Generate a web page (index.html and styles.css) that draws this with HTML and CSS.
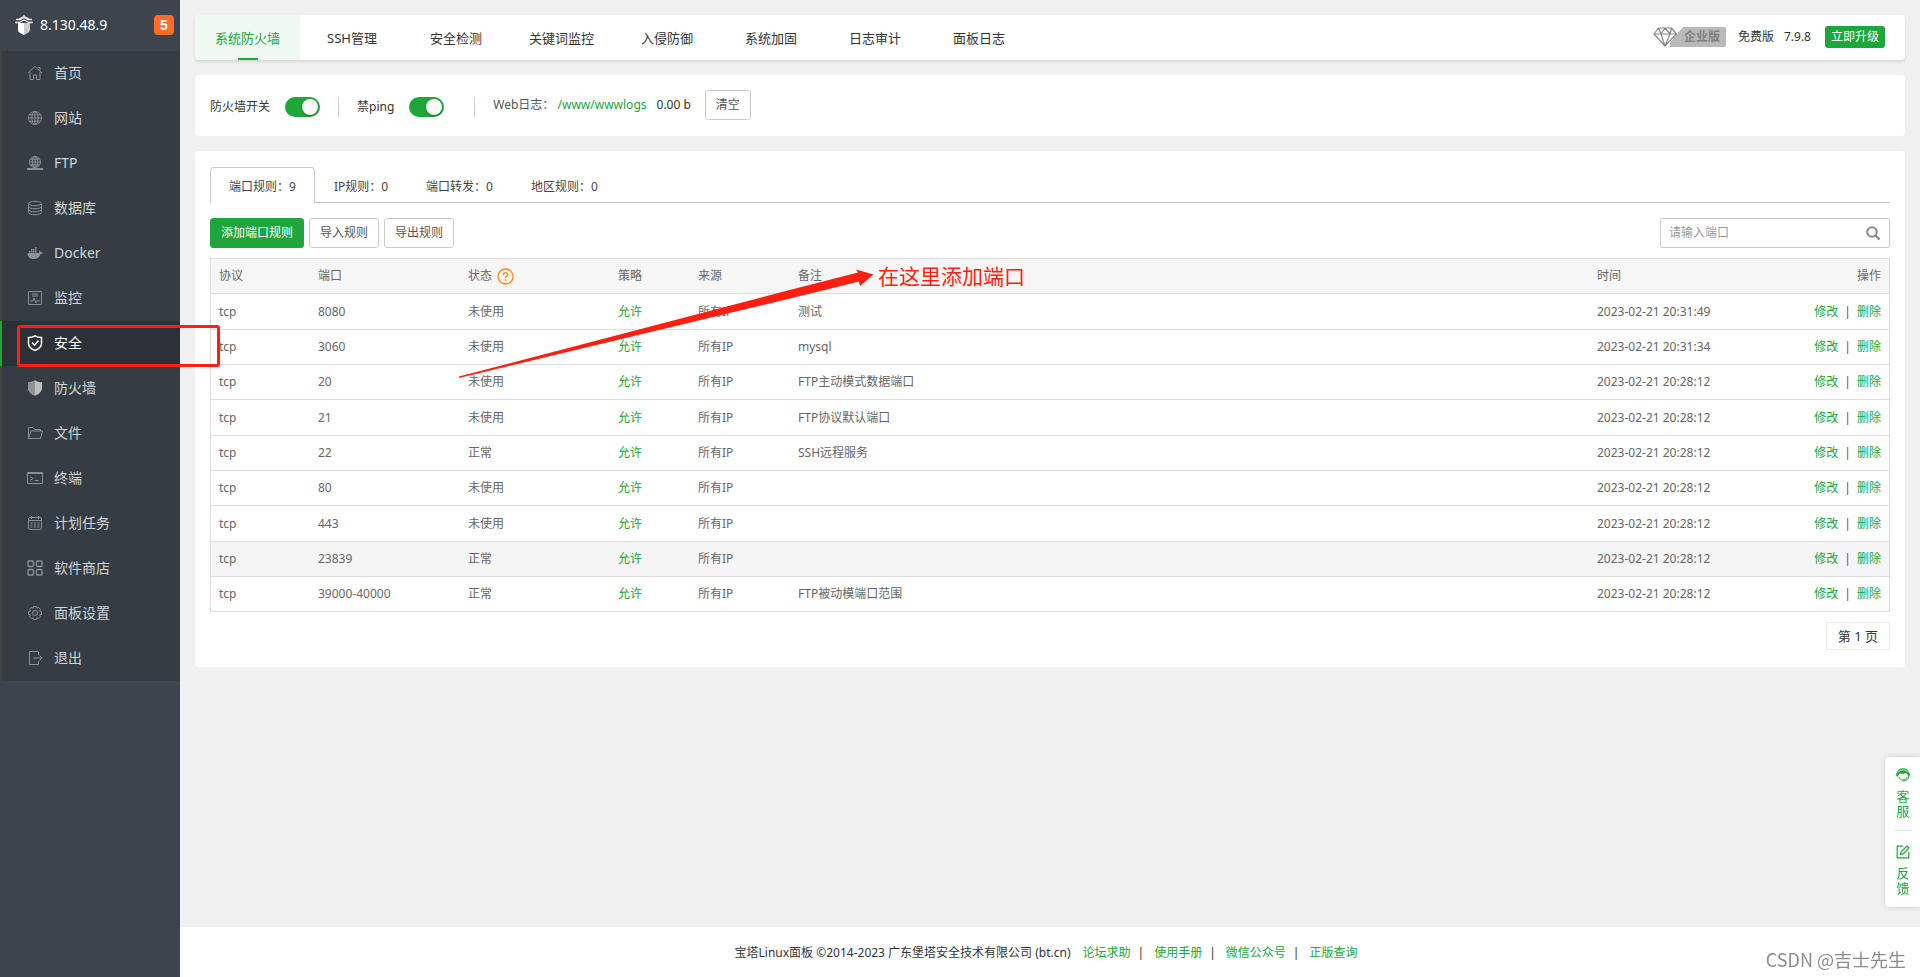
FILE: index.html
```html
<!DOCTYPE html>
<html lang="zh-CN">
<head>
<meta charset="utf-8">
<title>宝塔Linux面板</title>
<link rel="stylesheet" href="styles.css">
</head>
<body>
<div class="layout">
  <aside class="sidebar">
    <div class="brand">
      <svg class="brand-logo" viewBox="0 0 18 20" width="18" height="20"><path fill="#c9cbcd" d="M3 8h12v7c0 2-3 3.500-6 5-3-1.500-6-3-6-5z"/><path fill="#fff" d="M3 8h6v12c-3-1.500-6-3-6-5z"/><path fill="none" stroke="#e8e9ea" stroke-width="1.300" d="M9 0v3M4 4l5-2.500L14 4M1 4.500h4l4-2 4 2h4M0 7.500h4l5-2.500 5 2.500h4"/></svg>
      <span class="brand-ip">8.130.48.9</span>
      <span class="brand-badge">5</span>
    </div>
    <nav class="menu">
      <a class="menu-item" href="#"><svg class="menu-icon" viewBox="0 0 16 16"><path d="M1 8l7-6.500L15 8M3 7v7.500h3.500V10h3v4.500H13V7M11 2.500h2v3"/></svg>首页</a>
      <a class="menu-item" href="#"><svg class="menu-icon" viewBox="0 0 16 16"><circle cx="8" cy="8" r="6.500"/><ellipse cx="8" cy="8" rx="3.200" ry="6.500"/><path d="M8 1.500v13M1.500 8h13M2.500 4.800h11M2.500 11.200h11"/></svg>网站</a>
      <a class="menu-item" href="#"><svg class="menu-icon" viewBox="0 0 16 16"><circle cx="8" cy="7" r="5.500"/><ellipse cx="8" cy="7" rx="2.700" ry="5.500"/><path d="M8 1.500v11M2.500 7h11M3.500 4.200h9M3.500 9.800h9"/><path stroke-width="2" d="M0 14h16"/></svg>FTP</a>
      <a class="menu-item" href="#"><svg class="menu-icon" viewBox="0 0 16 16"><ellipse cx="8" cy="3.500" rx="6.500" ry="2.200"/><path d="M1.500 3.500v9c0 3 13 3 13 0v-9M1.500 6.500c0 3 13 3 13 0M1.500 9.500c0 3 13 3 13 0"/></svg>数据库</a>
      <a class="menu-item" href="#"><svg class="menu-icon menu-icon-fill" viewBox="0 0 16 16"><path d="M1 8h10.500c.8-.3 1-1.500.6-2.500 1 .3 1.500 1 1.600 1.700.8-.1 1.700 0 2.300.5-.5 1-1.500 1.300-2.500 1.300C12.500 12.500 10 14 6.500 14 3 14 .6 12 .6 8.500zM2 6h1.500v1.500H2zM4 6h1.500v1.500H4zM6 6h1.500v1.500H6zM8 6h1.500v1.500H8zM4 4h1.500v1.500H4zM6 4h1.500v1.500H6zM8 4h1.500v1.500H8zM8 2h1.500v1.500H8z"/></svg>Docker</a>
      <a class="menu-item" href="#"><svg class="menu-icon" viewBox="0 0 16 16"><path d="M1.500 1.500h13v13h-13zM5 4h6M5 6h6M3 11h3l1-3 2 5 1.500-3 1 1H13"/></svg>监控</a>
      <a class="menu-item menu-item-active" href="#"><svg class="menu-icon" viewBox="0 0 16 16"><path stroke-width="1.500" d="M8 .8c2 1.300 4 1.700 6.500 1.700v6c0 3.500-3 5.500-6.500 7-3.500-1.500-6.500-3.500-6.500-7v-6C4 2.500 6 2.100 8 .8zM5 7.500l2.500 2.700L11.500 5.500"/></svg>安全</a>
      <a class="menu-item" href="#"><svg class="menu-icon menu-icon-fill" viewBox="0 0 16 16"><path fill="#bdbfc1" d="M8 .3c2 1.500 4 2 7 2v6c0 3.700-3.500 5.900-7 7.500-3.500-1.600-7-3.800-7-7.500v-6c3 0 5-.5 7-2z"/><path fill="#8f9396" d="M8 .3v15.500c-3.500-1.600-7-3.800-7-7.500v-6c3 0 5-.5 7-2z"/></svg>防火墙</a>
      <a class="menu-item" href="#"><svg class="menu-icon" viewBox="0 0 16 16"><path d="M1.500 13.500v-11h4.500l1.500 2h6V6M1.500 13.500L4 6h11.500l-2 7.500z"/></svg>文件</a>
      <a class="menu-item" href="#"><svg class="menu-icon" viewBox="0 0 16 16"><path d="M.5 2.500h15v11H.5zM3 6.500l3 2-3 2M7.500 10.500h4"/><path stroke-width="2" d="M.5 3h15"/></svg>终端</a>
      <a class="menu-item" href="#"><svg class="menu-icon" viewBox="0 0 16 16"><path d="M3 2.500h10a1.500 1.500 0 0 1 1.500 1.500v9a1.500 1.500 0 0 1-1.500 1.500H3A1.500 1.500 0 0 1 1.500 13V4A1.500 1.500 0 0 1 3 2.500zM1.500 5.500h13M4.500 1v3M11.500 1v3"/><path stroke-dasharray="2 1.500" d="M3.500 8h9M3.500 10h9M3.500 12h9"/></svg>计划任务</a>
      <a class="menu-item" href="#"><svg class="menu-icon" viewBox="0 0 16 16"><g stroke-width="1.400"><rect x="1" y="1" width="5.500" height="5.500" rx="1"/><rect x="9.500" y="1" width="5.500" height="5.500" rx="1"/><rect x="1" y="9.500" width="5.500" height="5.500" rx="1"/><rect x="9.500" y="9.500" width="5.500" height="5.500" rx="1"/></g></svg>软件商店</a>
      <a class="menu-item" href="#"><svg class="menu-icon" viewBox="0 0 16 16"><circle cx="8" cy="8" r="2.500"/><path d="M6.700 1.500h2.600l.5 1.700 1.800-.8 1.900 1.900-.9 1.800 1.900.6v2.600l-1.900.6.9 1.800-1.900 1.900-1.800-.8-.5 1.700H6.700l-.5-1.700-1.800.8-1.900-1.900.9-1.800-1.900-.6V6.700l1.900-.6-.9-1.800 1.900-1.900 1.800.8z"/></svg>面板设置</a>
      <a class="menu-item" href="#"><svg class="menu-icon" viewBox="0 0 16 16"><path d="M11.500 5V1.500h-9v13h9V11M6 8h9M12.500 5.500L15 8l-2.500 2.500"/></svg>退出</a>
    </nav>
  </aside>

  <div class="page">
    <main class="main">
      <header class="topbar card">
        <nav class="tabs">
          <a class="tab tab-active" href="#">系统防火墙</a>
          <a class="tab" href="#">SSH管理</a>
          <a class="tab" href="#">安全检测</a>
          <a class="tab" href="#">关键词监控</a>
          <a class="tab" href="#">入侵防御</a>
          <a class="tab" href="#">系统加固</a>
          <a class="tab" href="#">日志审计</a>
          <a class="tab" href="#">面板日志</a>
        </nav>
        <div class="edition">
          <span class="edition-tag"><svg class="edition-gem" viewBox="0 0 25 20" width="25" height="20"><path d="M5.500 1h13L23.500 7 12 19 1 7zM1 7h22.500M5.500 1L8 7l4 12 5-12 1.500-6M8 7l4-6 5 6"/></svg><span class="edition-name">企业版</span></span>
          <span>免费版</span>
          <span class="edition-version">7.9.8</span>
          <button class="upgrade" type="button">立即升级</button>
        </div>
      </header>

      <section class="switches card">
        <label class="switch-label">防火墙开关<input class="switch" type="checkbox" checked></label>
        <span class="divider"></span>
        <label class="switch-label">禁ping<input class="switch" type="checkbox" checked></label>
        <span class="divider divider-wide"></span>
        <span class="weblog">Web日志： <a class="link" href="#">/www/wwwlogs</a></span>
        <span class="weblog-size">0.00 b</span>
        <button class="btn" type="button">清空</button>
      </section>

      <section class="rules card">
        <nav class="subtabs">
          <a class="subtab subtab-active" href="#">端口规则：9</a>
          <a class="subtab" href="#">IP规则：0</a>
          <a class="subtab" href="#">端口转发：0</a>
          <a class="subtab" href="#">地区规则：0</a>
        </nav>
        <div class="toolbar">
          <button class="btn btn-primary" type="button">添加端口规则</button>
          <button class="btn" type="button">导入规则</button>
          <button class="btn" type="button">导出规则</button>
          <form class="search">
            <input class="search-input" type="text" placeholder="请输入端口" aria-label="请输入端口">
            <button class="search-btn" type="button" aria-label="搜索"><svg viewBox="0 0 14 14" width="14" height="14"><circle cx="6" cy="6" r="4.800" fill="none" stroke="#888" stroke-width="2"/><path d="M9.500 9.500l4 4" stroke="#888" stroke-width="2.400"/></svg></button>
          </form>
        </div>
        <table class="table">
          <colgroup><col class="col-proto"><col class="col-port"><col class="col-port"><col class="col-policy"><col class="col-source"><col><col class="col-time"><col class="col-time"></colgroup>
          <thead>
            <tr><th>协议</th><th>端口</th><th><span class="th-help">状态<svg viewBox="0 0 17 17" width="17" height="17"><circle cx="8.500" cy="8.500" r="7.500" fill="none" stroke="#fc8a1c" stroke-width="1.300"/><path d="M6.300 7c0-3 4.400-3 4.400-.3 0 1.500-2.200 1.500-2.200 3.300M8.500 11.300v1.500" fill="none" stroke="#fc8a1c" stroke-width="1.300"/></svg></span></th><th>策略</th><th>来源</th><th>备注</th><th>时间</th><th class="ops">操作</th></tr>
          </thead>
          <tbody>
            <tr><td>tcp</td><td>8080</td><td>未使用</td><td><a class="link" href="#">允许</a></td><td>所有IP</td><td>测试</td><td>2023-02-21 20:31:49</td><td class="ops"><a class="link" href="#">修改</a><i class="bar">|</i><a class="link" href="#">删除</a></td></tr>
            <tr><td>tcp</td><td>3060</td><td>未使用</td><td><a class="link" href="#">允许</a></td><td>所有IP</td><td>mysql</td><td>2023-02-21 20:31:34</td><td class="ops"><a class="link" href="#">修改</a><i class="bar">|</i><a class="link" href="#">删除</a></td></tr>
            <tr><td>tcp</td><td>20</td><td>未使用</td><td><a class="link" href="#">允许</a></td><td>所有IP</td><td>FTP主动模式数据端口</td><td>2023-02-21 20:28:12</td><td class="ops"><a class="link" href="#">修改</a><i class="bar">|</i><a class="link" href="#">删除</a></td></tr>
            <tr><td>tcp</td><td>21</td><td>未使用</td><td><a class="link" href="#">允许</a></td><td>所有IP</td><td>FTP协议默认端口</td><td>2023-02-21 20:28:12</td><td class="ops"><a class="link" href="#">修改</a><i class="bar">|</i><a class="link" href="#">删除</a></td></tr>
            <tr><td>tcp</td><td>22</td><td>正常</td><td><a class="link" href="#">允许</a></td><td>所有IP</td><td>SSH远程服务</td><td>2023-02-21 20:28:12</td><td class="ops"><a class="link" href="#">修改</a><i class="bar">|</i><a class="link" href="#">删除</a></td></tr>
            <tr><td>tcp</td><td>80</td><td>未使用</td><td><a class="link" href="#">允许</a></td><td>所有IP</td><td></td><td>2023-02-21 20:28:12</td><td class="ops"><a class="link" href="#">修改</a><i class="bar">|</i><a class="link" href="#">删除</a></td></tr>
            <tr><td>tcp</td><td>443</td><td>未使用</td><td><a class="link" href="#">允许</a></td><td>所有IP</td><td></td><td>2023-02-21 20:28:12</td><td class="ops"><a class="link" href="#">修改</a><i class="bar">|</i><a class="link" href="#">删除</a></td></tr>
            <tr class="row-hover"><td>tcp</td><td>23839</td><td>正常</td><td><a class="link" href="#">允许</a></td><td>所有IP</td><td></td><td>2023-02-21 20:28:12</td><td class="ops"><a class="link" href="#">修改</a><i class="bar">|</i><a class="link" href="#">删除</a></td></tr>
            <tr><td>tcp</td><td>39000-40000</td><td>正常</td><td><a class="link" href="#">允许</a></td><td>所有IP</td><td>FTP被动模端口范围</td><td>2023-02-21 20:28:12</td><td class="ops"><a class="link" href="#">修改</a><i class="bar">|</i><a class="link" href="#">删除</a></td></tr>
          </tbody>
        </table>
        <div class="pager"><span class="pager-item">第 1 页</span></div>
      </section>
    </main>

    <footer class="footer">
      <span class="footer-copy">宝塔Linux面板 ©2014-2023 广东堡塔安全技术有限公司 (bt.cn)</span>
      <a class="link" href="#">论坛求助</a><i class="footer-bar">|</i>
      <a class="link" href="#">使用手册</a><i class="footer-bar">|</i>
      <a class="link" href="#">微信公众号</a><i class="footer-bar">|</i>
      <a class="link" href="#">正版查询</a>
    </footer>
  </div>
</div>

<aside class="float">
  <a class="float-item" href="#"><svg viewBox="0 0 14 14" width="14" height="14"><path fill="#20a53a" d="M7 .3a6.300 5.800 0 0 1 6 4.500c1 .5 1.300 3 0 3.600h-1.200C12 6.500 11 5.500 9.500 5.200 8 6 5 6 4.300 5.500 3 6 2.200 7 2.300 8.400H1C-.3 7.800 0 5.300 1 4.800A6.300 5.800 0 0 1 7 .3z"/><path fill="none" stroke="#20a53a" d="M3 9c.5 2 2 3 4 3s3.500-1 4-3M13 8c0 2.500-2 4.500-5 5H6.500"/><path fill="none" stroke="#fff" stroke-width=".7" d="M2.200 4.200C4 1.200 10 1.200 11.800 4.200"/></svg><span>客服</span></a>
  <a class="float-item" href="#"><svg viewBox="0 0 14 14" width="14" height="14"><path fill="none" stroke="#20a53a" stroke-width="1.200" d="M7 1.200H1.200v11.600h11.600V7M4.500 9.500l.6-2.700L11 1l2 2-5.800 5.900z"/></svg><span>反馈</span></a>
</aside>

<div class="mark-box"></div>
<svg class="mark-arrow" viewBox="0 0 415 110" width="415" height="110"><path fill="#ff1f10" d="M0 107.500L321 23.500 399 3.500 397 .5 414.500 5.500 401 17 400 12.500 321 32 0 109z"/></svg>
<div class="mark-text">在这里添加端口</div>
<div class="watermark">CSDN @吉士先生</div>
</body>
</html>
```
FILE: styles.css
```css
* { box-sizing: border-box; }

body {
  margin: 0;
  background: #f0f0f0;
  color: #333;
  font: 12px/18px "Noto Sans", "Noto Sans CJK SC", sans-serif;
}

a { color: inherit; text-decoration: none; }
i { font-style: normal; }
button, input { font: inherit; margin: 0; }
.link { color: #20a53a; }

.layout { display: flex; min-height: 100vh; }

/* Sidebar */
.sidebar { flex: none; width: 180px; background: #3c444d; }
.brand {
  display: flex;
  align-items: center;
  height: 51px;
  padding: 0 6px 2px 15px;
  color: #fff;
  font-size: 14px;
}
.brand-logo { margin-right: 7px; }
.brand-badge {
  margin-left: auto;
  width: 20px;
  border-radius: 4px;
  background: #ff6c23;
  font: bold 14px/20px "Liberation Sans", sans-serif;
  text-align: center;
}
.menu { background: #353d44; }
.menu-item {
  display: flex;
  align-items: center;
  gap: 11px;
  height: 45px;
  padding: 0 0 2px 25px;
  border-left: 2px solid #444;
  color: #d2d4d6;
  font-size: 14px;
}
.menu-icon { width: 16px; height: 16px; fill: none; stroke: #8b8f93; stroke-width: 1; }
.menu-icon-fill { fill: #8f9396; stroke: none; }
.menu-item-active { background: #2c3138; border-color: #20a53a; color: #fff; }
.menu-item-active .menu-icon { stroke: #fff; }

/* Page */
.page { flex: 1; min-width: 0; display: flex; flex-direction: column; }
.main { flex: 1; display: flex; flex-direction: column; gap: 15px; padding: 15px; }
.card { background: #fff; border-radius: 4px; }

.topbar {
  display: flex;
  justify-content: space-between;
  height: 45px;
  box-shadow: 0 2px 3px rgba(0, 0, 0, .1);
}
.tabs { display: flex; }
.tab {
  position: relative;
  min-width: 104px;
  padding: 0 21px;
  font-size: 13px;
  line-height: 46px;
  text-align: center;
}
.tab-active {
  padding: 0 20px;
  border-radius: 4px 0 0 4px;
  background: #eff9f1;
  color: #20a53a;
}
.tab-active::after {
  content: "";
  position: absolute;
  left: 50%;
  bottom: 0;
  width: 20px;
  height: 2px;
  margin-left: -10px;
  background: #20a53a;
}
.edition { display: flex; align-items: center; padding: 0 20px 1px 0; }
.edition-tag { display: flex; margin-right: 12px; }
.edition-gem { position: relative; fill: #fff; stroke: #888; stroke-width: 1.2; stroke-linejoin: round; }
.edition-name {
  width: 56px;
  margin-left: -8px;
  padding-left: 14px;
  border-radius: 0 2px 2px 0;
  background: linear-gradient(130deg, #fff 10px, #b9b9b9 10px);
  color: #808080;
  font-weight: bold;
  line-height: 20px;
}
.edition-version { margin: 0 14px 0 10px; }
.upgrade {
  height: 22px;
  padding: 0 6px;
  border: 0;
  border-radius: 3px;
  background: #20a53a;
  color: #fff;
}

.switches { display: flex; align-items: center; padding: 15px 15px 16px; }
.switch-label { display: flex; align-items: center; gap: 15px; margin-top: 3px; }
.switch {
  appearance: none;
  width: 35px;
  height: 20px;
  padding: 2px;
  border-radius: 10px;
  background: #20a53a;
}
.switch::before {
  content: "";
  display: block;
  width: 16px;
  height: 16px;
  margin-left: 15px;
  border-radius: 50%;
  background: #fafafa;
  box-shadow: 0 1px 2px rgba(0, 0, 0, .3);
}
.divider { width: 1px; height: 20px; margin: 3px 18px 0; background: #ccc; }
.divider-wide { margin-left: 30px; }
.weblog { color: #555; }
.weblog-size { margin: 0 14px 0 10px; }

.btn {
  height: 30px;
  padding: 0 10px;
  border: 1px solid #ccc;
  border-radius: 3px;
  background: #fff;
  color: #555;
}
.btn-primary { border-color: #20a53a; background: #20a53a; color: #fff; }

.rules { padding: 16px 15px 17px; }
.subtabs { display: flex; border-bottom: 1px solid #c8c8d4; }
.subtab { padding: 10px 18px 6px; border: 1px solid transparent; border-bottom: 0; color: #444; }
.subtab-active {
  margin-bottom: -1px;
  padding-bottom: 7px;
  border-color: #c8c8d4;
  border-radius: 4px 4px 0 0;
  background: #fff;
}
.toolbar { display: flex; gap: 5px; padding: 15px 0 10px; }
.search {
  display: flex;
  width: 230px;
  height: 30px;
  margin-left: auto;
  border: 1px solid #ccc;
  border-radius: 2px;
}
.search-input { flex: 1; min-width: 0; padding: 0 8px; border: 0; background: none; outline: 0; }
.search-input::placeholder { color: #999; }
.search-btn { display: flex; align-items: center; padding: 0 9px; border: 0; background: none; }

.table {
  width: 100%;
  table-layout: fixed;
  border: 1px solid #ddd;
  border-spacing: 0;
  border-collapse: separate;
  border-bottom: 0;
  color: #666;
}
.table th, .table td { height: 35px; padding: 0 8px; border-bottom: 1px solid #ddd; text-align: left; font-weight: normal; }
.table th { background: #f6f6f6; }
.table tbody tr:nth-child(3n+1) td { height: 36px; }
.table .row-hover td { background: #f5f5f5; }
.table .ops { text-align: right; }
.col-proto { width: 99px; }
.col-port { width: 150px; }
.col-policy { width: 80px; }
.col-source { width: 100px; }
.col-time { width: 150px; }
.th-help { display: flex; align-items: center; gap: 5px; }
.bar { margin: 0 6px; color: #555; }

.pager { display: flex; justify-content: flex-end; margin-top: 10px; }
.pager-item { padding: 3px 11px; border: 1px solid #ececec; font-size: 13px; line-height: 20px; }

.footer {
  display: flex;
  align-items: center;
  justify-content: center;
  height: 50px;
  padding: 2px 8px 0 0;
  background: #fff;
}
.footer-copy { margin-right: 12px; }
.footer-bar { margin: 0 10px 0 7px; }

/* Side contact widget */
.float {
  position: fixed;
  right: 0;
  bottom: 70px;
  width: 35px;
  padding: 0 8px 0 9px;
  border-radius: 4px 0 0 4px;
  background: #fff;
  box-shadow: 0 0 5px rgba(0, 0, 0, .15);
}
.float-item {
  display: flex;
  flex-direction: column;
  align-items: center;
  gap: 7px;
  padding: 11px 0;
  color: #20a53a;
  font-size: 13px;
  line-height: 15px;
}
.float-item span { width: 13px; }
.float-item + .float-item { padding-top: 14px; border-top: 1px solid #e5e5e5; }

/* Annotations over the page */
.mark-box {
  position: absolute;
  left: 17px;
  top: 325px;
  width: 203px;
  height: 42px;
  border: 3px solid #ff1f10;
  border-radius: 3px;
}
.mark-arrow { position: absolute; left: 459px; top: 269px; }
.mark-text {
  position: absolute;
  left: 878px;
  top: 262px;
  color: #ff1f10;
  font-size: 21px;
  line-height: 28px;
}
.watermark {
  position: fixed;
  right: 14px;
  bottom: 6px;
  color: #8c8c8c;
  font: 18px/24px "Noto Sans CJK SC", sans-serif;
}
```
